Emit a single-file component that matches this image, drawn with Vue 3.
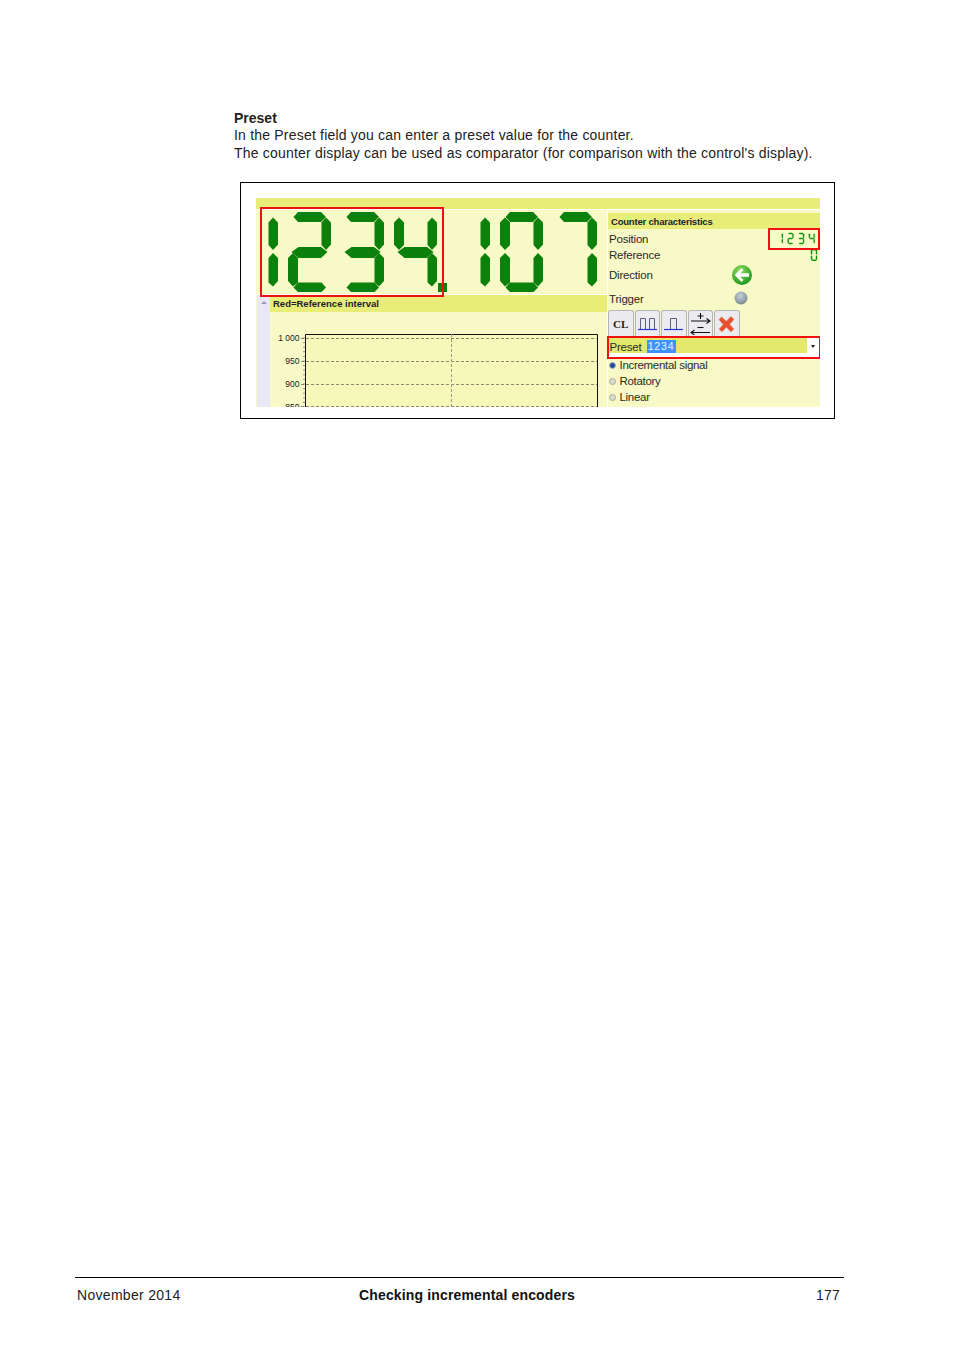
<script setup>
import { computed } from 'vue'

// seven segment shapes, drawn in a 43x80 cell
const shapes = {
  a: '5.500,5 10,0 33,0 38,5 33,10 10,10',
  b: '38,5.500 43,10.500 43,32.500 38,38 33.500,33 33.500,10.500',
  c: '38,41 43,46 43,69 38,74.500 33.500,70.500 33.500,46',
  d: '5.500,75.500 10,70.500 33.500,70.500 38,75.500 33.500,80 10,80',
  e: '5,41 10,46 10,70.500 5,74.500 0,69 0,46',
  f: '5,5.500 10,10.500 10,33 5,38 0,32.500 0,10.500',
  g: '3.500,40 10.500,35 33,35 39.500,40 33,46 10.500,46'
}
const map = { 0: 'abcdef', 1: 'bc', 2: 'abged', 3: 'abgcd', 4: 'fgbc', 7: 'abc' }

const cells = (chars, pitch = 53) =>
  chars.split('').map((ch, i) => ({
    x: i * pitch,
    polys: map[ch].split('').map((s) => shapes[s])
  }))

const bigDigits = computed(() => cells('1234107'))
const smallDigits = computed(() => cells('1234', 74))
const zeroDigit = computed(() => cells('0'))

const gridLines = [26.5, 49.5, 72.5, 94.5]
const labels = [
  { y: 29, t: '1 000' },
  { y: 52, t: '950' },
  { y: 75, t: '900' },
  { y: 98, t: '850' }
]
const ticks = Array.from({ length: 16 }, (_, i) => 26 + i * 4.6)
const radios = [
  { label: 'Incremental signal', on: true },
  { label: 'Rotatory', on: false },
  { label: 'Linear', on: false }
]
</script>

<template>
  <div class="page">
    <div class="content">
      <h2 class="title">Preset</h2>
      <p class="line">In the Preset field you can enter a preset value for the counter.</p>
      <p class="line">The counter display can be used as comparator (for comparison with the control's display).</p>

      <div class="frame">
        <div class="panel">
          <div class="topbar"></div>
          <div class="body">
            <div class="left">
              <svg class="display" width="351" height="84" viewBox="0 0 351 84">
                <g v-for="(d, i) in bigDigits" :key="i" :transform="`translate(${d.x - 21 + (i === 6 ? 1 : 0)} 2)`">
                  <polygon v-for="(p, j) in d.polys" :key="j" :points="p" fill="#0b800b" />
                </g>
                <rect x="182" y="73" width="9" height="9" fill="#0b800b" />
              </svg>
              <div class="chartrow">
                <div class="gutter"><span class="arrow"></span></div>
                <div class="chartcol">
                  <div class="charthead">Red=Reference interval</div>
                  <svg class="chart" width="337" height="95" viewBox="0 0 337 95">
                    <rect x="35" y="22" width="292" height="80" fill="#f5f8b8" />
                    <path d="M35.500 95V22.500H327.500V95" fill="none" stroke="#111" stroke-width="1" />
                    <line v-for="y in gridLines" :key="y" x1="31" x2="327" :y1="y" :y2="y" stroke="#8b8b6c" stroke-width="1" stroke-dasharray="3 2" />
                    <line x1="181.500" x2="181.500" y1="22" y2="95" stroke="#9a9a7c" stroke-width="1" stroke-dasharray="3 2" />
                    <line v-for="t in ticks" :key="t" x1="33" x2="35" :y1="t" :y2="t" stroke="#555" stroke-width="0.6" />
                    <text v-for="l in labels" :key="l.t" class="axis" x="29.500" :y="l.y" text-anchor="end">{{ l.t }}</text>
                  </svg>
                </div>
              </div>
              <div class="mark mark-big"></div>
            </div>

            <div class="right">
              <div class="head">Counter characteristics</div>
              <div class="row row-pos">
                <span>Position</span>
                <svg class="readout" width="38" height="13" viewBox="0 0 265 80">
                  <g v-for="(d, i) in smallDigits" :key="i" :transform="`translate(${d.x - 22} 0)`">
                    <polygon v-for="(p, j) in d.polys" :key="j" :points="p" fill="#129412" />
                  </g>
                </svg>
              </div>
              <div class="row row-ref">
                <span>Reference</span>
                <svg class="readout" width="8" height="12" viewBox="0 0 43 80">
                  <g v-for="(d, i) in zeroDigit" :key="i">
                    <polygon v-for="(p, j) in d.polys" :key="j" :points="p" fill="#129412" />
                  </g>
                </svg>
              </div>
              <div class="row row-dir">
                <span class="lab">Direction</span>
                <svg width="22" height="22" viewBox="0 0 22 22">
                  <defs>
                    <radialGradient id="gr" cx="40%" cy="30%" r="75%">
                      <stop offset="0" stop-color="#8fe05a" />
                      <stop offset="1" stop-color="#18921c" />
                    </radialGradient>
                  </defs>
                  <circle cx="11" cy="11" r="10" fill="url(#gr)" />
                  <path d="M10.500 4 3.800 11l6.700 7 2-2-3.200-3.300H18v-3.400H9.300L12.500 6z" fill="#fff" />
                </svg>
              </div>
              <div class="row row-trig">
                <span class="lab">Trigger</span>
                <svg class="led" width="16" height="16" viewBox="0 0 16 16">
                  <defs>
                    <radialGradient id="gy" cx="45%" cy="35%" r="70%">
                      <stop offset="0" stop-color="#c5d3dc" />
                      <stop offset="1" stop-color="#76858c" />
                    </radialGradient>
                  </defs>
                  <circle cx="8" cy="8" r="6.500" fill="url(#gy)" />
                </svg>
              </div>

              <div class="buttons">
                <button class="btn cl">CL</button>
                <button class="btn">
                  <svg width="21" height="16" viewBox="0 0 21 16"><path d="M3.500 13V2.500H8.500V13M12.500 13V2.500H17.500V13" fill="none" stroke="#5a6080" stroke-width="1" /><path d="M1 13.500H20" stroke="#2a35d5" stroke-width="1.200" /></svg>
                </button>
                <button class="btn">
                  <svg width="21" height="16" viewBox="0 0 21 16"><path d="M7.500 13V2.500H13.500V13" fill="none" stroke="#5a6080" stroke-width="1" /><path d="M1 13.500H20" stroke="#2a35d5" stroke-width="1.200" /></svg>
                </button>
                <button class="btn">
                  <svg width="21" height="23" viewBox="0 0 21 23" fill="none" stroke="#111" stroke-width="1.100">
                    <path d="M7.500 4h6M10.500 1v6" />
                    <path d="M1 9H20M16.500 6.500 20 9l-3.500 2.500" />
                    <path d="M7.500 15.500h6" />
                    <path d="M20 20.500H1M4.500 18 1 20.500 4.500 23" />
                  </svg>
                </button>
                <button class="btn">
                  <svg width="17" height="18" viewBox="0 0 20 20"><path d="M4 1.500 10 6.500 15 1l4 3.500-5 6 5 5.500-4 3.500-5-5.500-5.500 5.500L1 16l5-5.500L1 5z" fill="#e8502f" stroke="#d6b49c" stroke-width="0.800" /></svg>
                </button>
              </div>

              <div class="preset">
                <span class="plabel">Preset</span>
                <div class="pfield"><span class="sel">1234</span></div>
                <span class="caret"></span>
              </div>

              <div class="radios">
                <div v-for="r in radios" :key="r.label" class="radio">
                  <span class="dot" :class="{ on: r.on }"></span>{{ r.label }}
                </div>
              </div>
              <div class="mark mark-pos"></div>
            </div>
          </div>
        </div>
      </div>
    </div>

    <footer class="foot">
      <span class="date">November 2014</span>
      <strong class="chapter">Checking incremental encoders</strong>
      <span class="num">177</span>
    </footer>
  </div>
</template>

<style scoped>
.page {
  width: 954px;
  height: 1350px;
  display: flex;
  flex-direction: column;
  font-family: "Liberation Sans", Arial, sans-serif;
  color: #222;
  overflow: hidden;
}

.content {
  margin-left: 234px;
  padding-top: 110px;
}
.title {
  margin: 0;
  font-size: 14px;
  line-height: 16px;
  font-weight: bold;
}
.line {
  margin: 0;
  font-size: 14px;
  line-height: 18px;
  letter-spacing: 0.2px;
}

.frame {
  width: 595px;
  height: 237px;
  margin: 20px 0 0 6px;
  padding: 15px 14px 0 15px;
  box-sizing: border-box;
  border: 1px solid #000;
}
.panel {
  width: 564px;
  height: 209px;
  overflow: hidden;
  background: #f7f9c6;
  font-size: 11.5px;
  color: #2a2a2a;
}
.topbar {
  height: 11px;
  background: #e8ec78;
  border-bottom: 1px solid #fff;
}
.body {
  display: flex;
  height: 197px;
  position: relative;
}
.left {
  width: 351px;
  position: relative;
  flex: none;
}
.display {
  display: block;
  border-bottom: 1px solid #fff;
}
.chartrow {
  display: flex;
  height: 112px;
}
.gutter {
  width: 13px;
  margin-left: 1px;
  background: #e9e9f6;
  position: relative;
}
.arrow {
  position: absolute;
  left: 4px;
  top: 6px;
  border-left: 3px solid transparent;
  border-right: 3px solid transparent;
  border-bottom: 3px solid #9a9aa8;
}
.chartcol {
  flex: 1;
  min-width: 0;
}
.charthead {
  height: 17px;
  line-height: 17px;
  padding-left: 3px;
  background: #e8ec78;
  font-size: 9.500px;
  font-weight: bold;
  color: #1c1c30;
}
.chart {
  display: block;
}
.axis {
  font-family: "Liberation Sans", Arial, sans-serif;
  font-size: 8.500px;
  fill: #222;
}

.right {
  flex: 1;
  border-left: 1px solid #fff;
  position: relative;
  padding-top: 3px;
}
.head {
  height: 16px;
  line-height: 17px;
  padding-left: 3px;
  background: #e8ec78;
  font-size: 9.500px;
  font-weight: bold;
  color: #1c1c30;
  letter-spacing: -0.200px;
}
.row {
  display: flex;
  align-items: center;
  padding-left: 1px;
  letter-spacing: -0.200px;
}
.row-pos {
  height: 19px;
}
.row-ref {
  height: 14px;
}
.row-dir {
  height: 25px;
}
.row-trig {
  height: 23px;
}
.readout {
  margin-left: auto;
  margin-right: 2px;
}
.lab {
  width: 122px;
  flex: none;
}
.led {
  margin: -1px 0 0 2px;
}

.buttons {
  display: flex;
  gap: 1px;
  height: 26px;
}
.btn {
  width: 25.500px;
  height: 26px;
  padding: 0;
  border: 1px solid #b5b5b8;
  border-bottom: none;
  border-radius: 3px 3px 0 0;
  background: #ececf0;
  display: flex;
  align-items: center;
  justify-content: center;
}
.cl {
  font-family: "Liberation Serif", serif;
  font-weight: bold;
  font-size: 11px;
  color: #222;
}

.preset {
  display: flex;
  align-items: flex-start;
  height: 23px;
  margin: 0 -1px 0 -1px;
  border: 2.500px solid #f01010;
  box-sizing: border-box;
  background: #fff;
}
.plabel {
  width: 37.500px;
  flex: none;
  padding-left: 0.500px;
  background: #e3e96c;
  height: 15px;
  line-height: 19px;
  box-sizing: border-box;
  letter-spacing: -0.200px;
}
.pfield {
  width: 160px;
  height: 15px;
  flex: none;
  background: #e3e96c;
  display: flex;
}
.sel {
  width: 29px;
  height: 13px;
  margin-top: 2px;
  background: #3d94ff;
  color: #eaf2ff;
  font-size: 10.500px;
  line-height: 13px;
  text-align: center;
  letter-spacing: 0.800px;
}
.caret {
  margin: 7px 0 0 4px;
  border-left: 2.500px solid transparent;
  border-right: 2.500px solid transparent;
  border-top: 3px solid #222;
}

.radios {
  margin-top: -2px;
}
.radio {
  height: 16px;
  line-height: 16px;
  display: flex;
  align-items: center;
  letter-spacing: -0.300px;
}
.dot {
  width: 5px;
  height: 5px;
  margin: 0 4px 0 0.500px;
  border-radius: 50%;
  background: #d8dccd;
  border: 1px solid #a9ad9e;
  box-sizing: content-box;
  flex: none;
}
.dot.on {
  background: #24489a;
  border-color: #a8b4cc;
}

.mark {
  position: absolute;
  box-sizing: border-box;
  pointer-events: none;
}
.mark-big {
  left: 4px;
  top: -3px;
  width: 184px;
  height: 90px;
  border: 2.500px solid #f01010;
}
.mark-pos {
  left: 160px;
  top: 18px;
  width: 52px;
  height: 22px;
  border: 2.500px solid #f01010;
}

.foot {
  margin: auto 0 0 75px;
  width: 769px;
  height: 73px;
  box-sizing: border-box;
  border-top: 1px solid #000;
  padding: 9px 4px 0 2px;
  display: flex;
  font-size: 14px;
  line-height: 17px;
  color: #222;
}
.date {
  width: 282px;
  letter-spacing: 0.300px;
}
.chapter {
  color: #111;
  letter-spacing: 0.150px;
}
.num {
  margin-left: auto;
  letter-spacing: 0.200px;
}
</style>
<style>
html,
body {
  background: #fff;
}
</style>
